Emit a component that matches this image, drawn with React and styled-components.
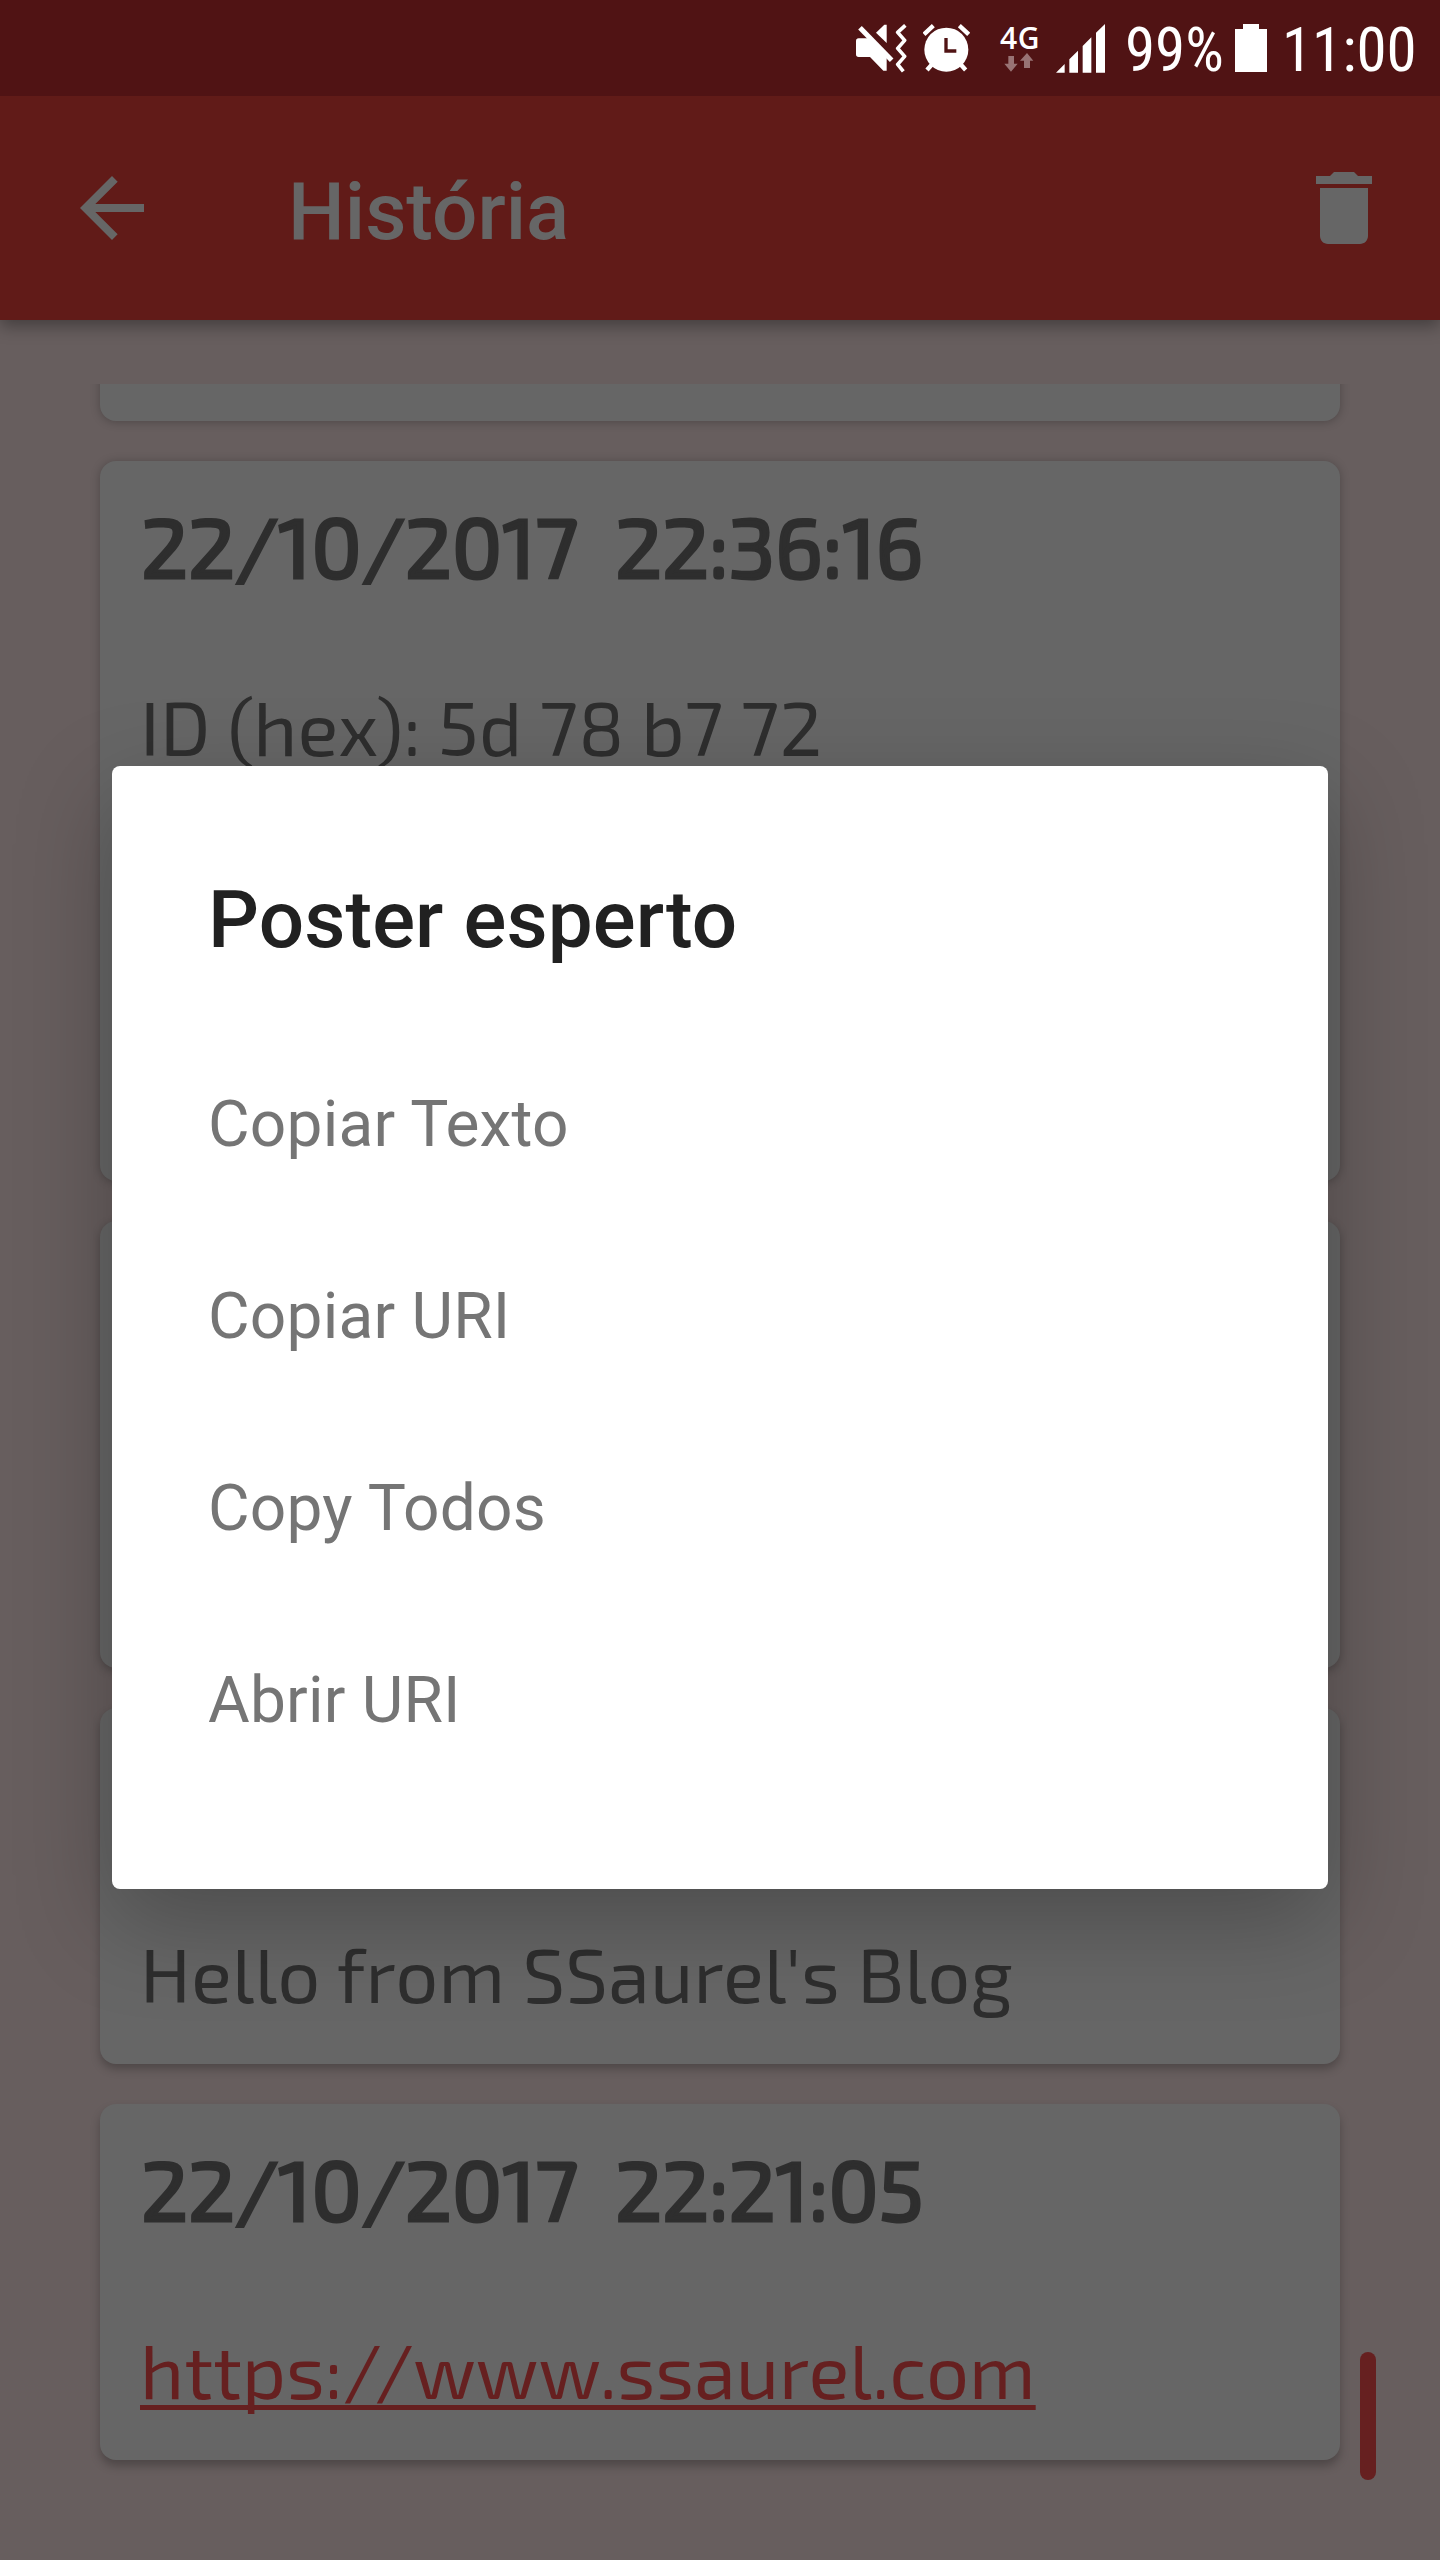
import React from 'react';
import styled, { createGlobalStyle } from 'styled-components'

const CARD_FONT = '"Exo 2", "Noto Sans", sans-serif'

const GlobalStyle = createGlobalStyle`
  body {
    margin: 0;
  }
  * {
    box-sizing: border-box;
  }
`

const Screen = styled.div`
  position: relative;
  display: flex;
  flex-direction: column;
  width: 1440px;
  height: 2560px;
  overflow: hidden;
  background: #675e5e;
  font-family: Roboto, sans-serif;
`

// sits above the toolbar so its shadow stays below
const StatusBar = styled.div`
  position: relative;
  z-index: 1;
  display: flex;
  align-items: center;
  justify-content: flex-end;
  flex-shrink: 0;
  height: 96px;
  padding: 0 22px 0 0;
  background: #501314;
  color: white;
  svg {
    display: block;
    flex-shrink: 0;
  }
`

const Alarm = styled.div`
  margin: 0 30px 0 16px;
`

const Network = styled.div`
  display: flex;
  flex-direction: column;
  width: 40px;
  height: 50px;
  margin-right: 16px;
  font: 600 30px/30px "Open Sans", sans-serif;
  letter-spacing: 0.5px;
  svg {
    margin-left: 4px;
  }
`

const Percent = styled.div`
  width: 110px;
  margin-left: 20px;
  padding-top: 4px;
  font: 61px/72px "Roboto Condensed", Roboto, sans-serif;
`

const Clock = styled(Percent)`
  width: 136px;
  margin-left: 15px;
`

const Toolbar = styled.header`
  display: flex;
  align-items: center;
  flex-shrink: 0;
  height: 224px;
  padding: 0 48px 0 64px;
  background: #611b18;
  color: #666;
  box-shadow: 0 6px 16px rgba(0, 0, 0, 0.35);
`

const ToolbarTitle = styled.h1`
  flex-grow: 1;
  margin: 0;
  padding: 7px 0 0 128px;
  font-size: 80px;
  font-weight: 500;
  line-height: 96px;
`

const List = styled.main`
  display: flex;
  flex-direction: column;
  justify-content: flex-end;
  gap: 40px;
  height: 2176px;
  margin-top: 64px;
  padding: 0 100px 100px;
  overflow: hidden;
`

const Card = styled.article`
  display: flex;
  flex-direction: column;
  justify-content: ${p => p.$end ? 'flex-end' : 'flex-start'};
  flex-shrink: 0;
  height: ${p => p.$height}px;
  padding: 31px 40px 46px;
  border-radius: 16px;
  background: #666;
  color: #2e2e2e;
  box-shadow: 0 ${p => p.$lift}px 10px rgba(0, 0, 0, 0.25);
  font-family: ${CARD_FONT};
`

const CardDate = styled.div`
  margin: 0 0 82px 1px;
  font-size: 84px;
  line-height: 106px;
  letter-spacing: -0.25px;
  white-space: pre;
  -webkit-text-stroke: 3px #2e2e2e;
`

const CardText = styled.div`
  font-size: 76px;
  line-height: 91px;
  letter-spacing: ${p => p.$spacing || 0}px;
  white-space: nowrap;
`

const CardLink = styled.a`
  color: #662020;
  text-decoration: underline;
  text-decoration-thickness: 5px;
  text-decoration-skip-ink: none;
  text-underline-offset: 6px;
`

const ScrollThumb = styled.div`
  position: absolute;
  right: 64px;
  bottom: 80px;
  width: 16px;
  height: 128px;
  border-radius: 8px;
  background: #662020;
`

const Overlay = styled.div`
  position: absolute;
  inset: 766px 112px 671px;
`

const Dialog = styled.div`
  height: 100%;
  padding: 106px 96px 0;
  border-radius: 8px;
  background: white;
  box-shadow: 0 32px 96px rgba(0, 0, 0, 0.26);
`

const DialogTitle = styled.h2`
  margin: 0 0 109px;
  color: #212121;
  font-size: 80px;
  font-weight: 500;
  line-height: 96px;
  letter-spacing: 0.1px;
`

const DialogItem = styled.div`
  height: 192px;
  color: #757575;
  font-size: 64px;
  line-height: 96px;
  letter-spacing: 0.2px;
`

const MuteIcon = () => (
  <svg width="51" height="49" viewBox="48 72 153 147" fill="#fff">
    <path d="M56 115H86L140 170V212H130L90 171H56Q48 171 48 163V123Q48 115 56 115Z" />
    <path d="M108 98L133 74H140V129Z" />
    <path d="M60 83L155 181" stroke="#fff" strokeWidth="15" />
    <path d="M196 76L173 97L194 121L173 145L194 169L173 193L190 214" fill="none" stroke="#fff" strokeWidth="11" strokeLinejoin="round" />
  </svg>
)

const AlarmIcon = () => (
  <svg width="47" height="49" viewBox="250 72 141 147" fill="none" stroke="#fff" strokeWidth="13">
    <circle cx="320" cy="149" r="66" fill="#fff" stroke="none" />
    <path d="M253 103L281 77M359 77L387 103M278 192L262 210M362 192L378 210" />
    <path d="M319 114V153H350" stroke="#501314" strokeWidth="10" />
  </svg>
)

const DataArrows = () => (
  <svg width="30" height="19" viewBox="491 162 90 57" fill="#987374">
    <path d="M504 171H521V194H532L512 218L492 194H504Z" />
    <path d="M560 162L579 185H569V207H551V185H539Z" />
  </svg>
)

const SignalIcon = () => (
  <svg width="49" height="49" viewBox="648 70 147 147" fill="#fff">
    <path d="M648 216L674 190V216ZM688 216V176L714 150V216ZM728 216V136L754 110V216ZM768 216V96L795 70V216Z" />
  </svg>
)

const BatteryIcon = () => (
  <svg width="32" height="48" viewBox="0 0 32 48" fill="#fff">
    <path d="M8 0H24V5H32V48H0V5H8Z" />
  </svg>
)

const BackIcon = () => (
  <svg width="96" height="96" viewBox="0 0 24 24" fill="#666">
    <path d="M20 11H7.83l5.59-5.59L12 4l-8 8 8 8 1.41-1.41L7.83 13H20v-2z" />
  </svg>
)

const TrashIcon = () => (
  <svg width="96" height="96" viewBox="0 0 24 24" fill="#666">
    <path d="M6 19c0 1.100.9 2 2 2h8c1.100 0 2-.9 2-2V7H6v12zM19 4h-3.500l-1-1h-5l-1 1H5v2h14V4z" />
  </svg>
)

const actions = ['Copiar Texto', 'Copiar URI', 'Copy Todos', 'Abrir URI']

export default function App() {
  return (
    <>
      <GlobalStyle />
      <Screen>
        <StatusBar>
          <MuteIcon />
          <Alarm><AlarmIcon /></Alarm>
          <Network>4G<DataArrows /></Network>
          <SignalIcon />
          <Percent>99%</Percent>
          <BatteryIcon />
          <Clock>11:00</Clock>
        </StatusBar>
        <Toolbar>
          <BackIcon />
          <ToolbarTitle>História</ToolbarTitle>
          <TrashIcon />
        </Toolbar>
        <List>
          <Card $height={356} $lift={1} />
          <Card $height={720} $lift={1}>
            <CardDate>22/10/2017  22:36:16</CardDate>
            <CardText>ID (hex): 5d 78 b7 72</CardText>
          </Card>
          <Card $height={447} $lift={3} />
          <Card $height={356} $lift={5} $end>
            <CardText $spacing={0.16}>Hello from SSaurel's Blog</CardText>
          </Card>
          <Card $height={356} $lift={6}>
            <CardDate>22/10/2017  22:21:05</CardDate>
            <CardText><CardLink>https://www.ssaurel.com</CardLink></CardText>
          </Card>
        </List>
        <ScrollThumb />
        <Overlay>
          <Dialog>
            <DialogTitle>Poster esperto</DialogTitle>
            {actions.map(action => <DialogItem key={action}>{action}</DialogItem>)}
          </Dialog>
        </Overlay>
      </Screen>
    </>
  )
}
